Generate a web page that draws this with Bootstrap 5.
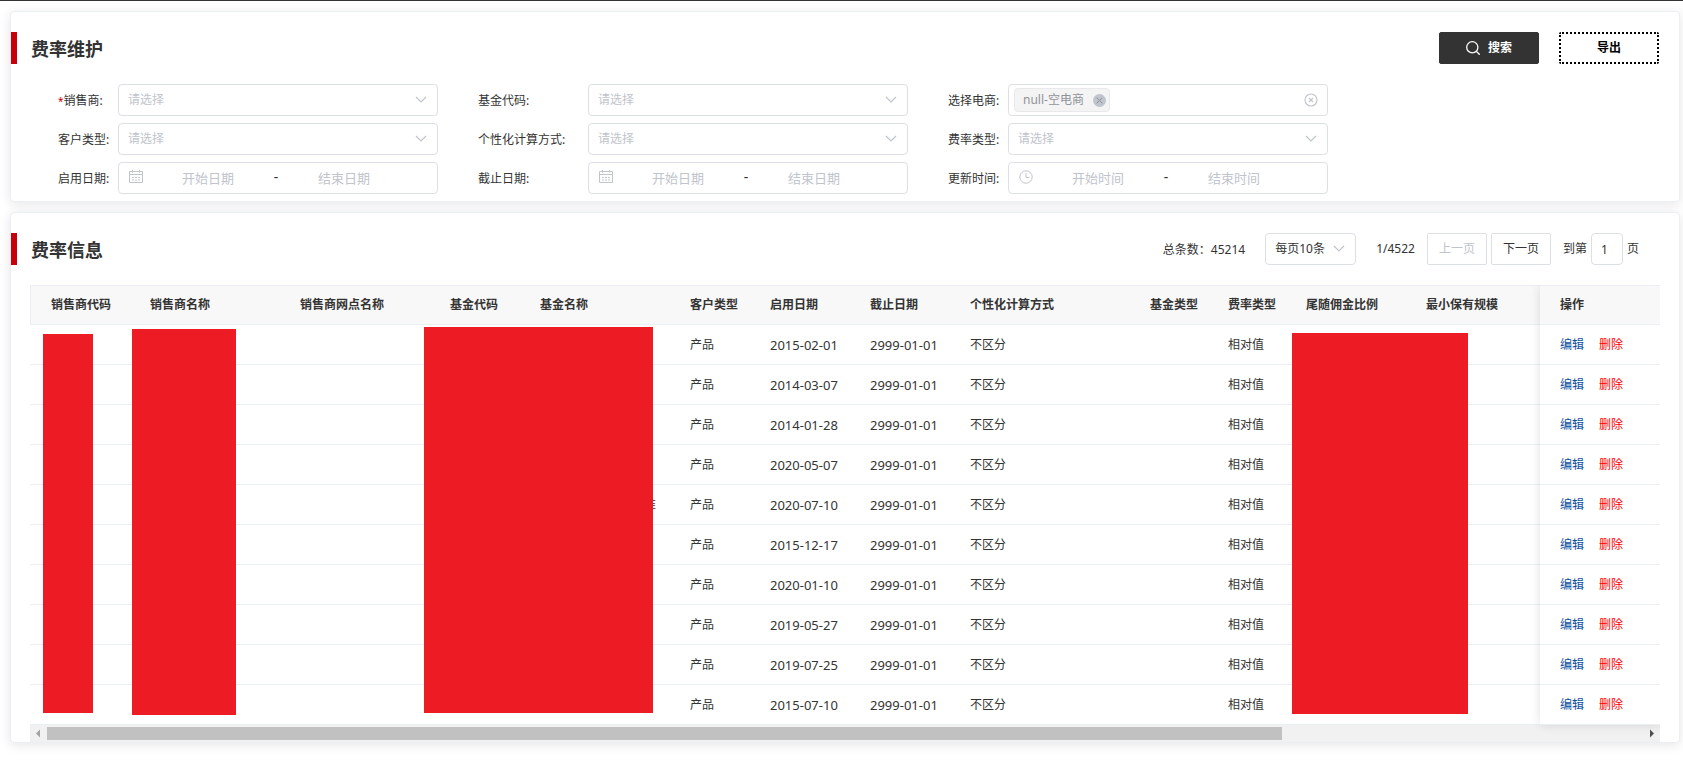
<!DOCTYPE html>
<html lang="zh-CN">
<head>
<meta charset="utf-8">
<meta name="viewport" content="width=device-width, initial-scale=1">
<title>费率维护</title>
<link href="https://cdn.jsdelivr.net/npm/bootstrap@5.3.0/dist/css/bootstrap.min.css" rel="stylesheet">
<style>
body { font-family: "Noto Sans", "Noto Sans CJK SC", sans-serif; font-size: 12px; line-height: 20px; color: #333; background: #fff; border-top: 1px solid #333; }
.page { padding: 10px 3px 20px 10px; gap: 10px; }
.panel { border: 1px solid #ebeef5; border-radius: 4px; box-shadow: 0 2px 12px rgba(0,0,0,.1); background: #fff; }
.panel-head { padding: 20px 20px 0 0; }
.panel-title { font-size: 18px; font-weight: 700; line-height: 30px; border-left: 6px solid #c7000b; padding: 2px 0 0 14px; margin: 0; }
.actions { gap: 20px; }
.action { width: 100px; height: 32px; border-radius: 2px; padding: 0; font-size: 12px; font-weight: 700; }
.action-search, .action-search:hover { background: #333; border-color: #333; color: #fff; }
.action-export, .action-export:hover { background: #fff; border: 2px dotted #000; color: #000; }
.filters { display: grid; grid-template-columns: minmax(0,380px) minmax(0,430px) minmax(0,380px); gap: 7px 40px; padding: 20px 20px 7px 47px; }
.field-label { width: 60px; flex: none; padding-top: 2px; white-space: nowrap; }
.wide .field-label { width: 110px; }
.req { color: #c7000b; font-size: 10px; }
.ctl { height: 32px; min-width: 0; flex: 1; border: 1px solid #dcdfe6; border-radius: 4px; background-color: #fff; font-size: 12px; color: #333; }
.ctl.form-select { color: #c0c4cc; padding: 0 30px 0 9px; background-image: url("data:image/svg+xml,%3Csvg xmlns='http://www.w3.org/2000/svg' viewBox='0 0 12 8'%3E%3Cpath d='M1 1l5 5 5-5' fill='none' stroke='%23c0c4cc' stroke-width='1.2'/%3E%3C/svg%3E"); background-size: 12px 8px; background-position: right 10px center; }
.multi { padding: 0 9px 0 5px; }
.range { padding: 0 10px; }
.range input { border: 0; padding: 0; width: 116px; min-width: 0; text-align: center; font-size: 13px; background: none; outline: 0; color: #333; }
.range input::placeholder { color: #c0c4cc; opacity: 1; }
.range svg { width: 14px; height: 14px; flex: none; margin: 0 7px 2px 0; }
.dash { width: 20px; text-align: center; font-size: 14px; padding-bottom: 2px; }
.tag { height: 24px; padding: 0 3px 0 8px; gap: 9px; border: 1px solid #e9e9eb; border-radius: 4px; background: #f4f4f5; color: #909399; }
.icon-btn { border: 0; padding: 0; background: none; display: flex; }
.num { font-size: 13px; }
.colon { font-family: "Noto Sans CJK TC", sans-serif; }
.pager { padding-right: 20px; }
.pager .ctl { flex: none; }
.ctl.form-select.size { width: 91px; color: #333; padding: 0 24px 0 9px; margin: 0 20px; }
.ctl.goto { width: 32px; padding: 0 9px; }
.page-btn, .page-btn:disabled, .page-btn:hover { width: 60px; height: 32px; padding: 0; border: 1px solid #dcdfe6; border-radius: 2px; background: #fff; color: #333; font-size: 12px; }
.page-btn:disabled { color: #c0c4cc; opacity: 1; }
.before { margin: 0 4px 0 12px; }
.table-zone { margin: 20px 19px 0; position: relative; }
.grid { width: 100%; table-layout: fixed; border-collapse: separate; border-spacing: 0; }
.grid th, .grid td { height: 40px; padding: 0 0 0 20px; border-bottom: 1px solid #ebeef5; white-space: nowrap; }
.grid th { background: #f8f8f8; font-weight: 700; border-top: 1px solid #ebeef5; }
.grid th:first-child { border-left: 1px solid #ebeef5; }
.grid .name { text-align: right; padding-right: 14px; }
.grid a { text-decoration: none; margin-right: 15px; }
.edit { color: #0d4ea2; }
.del { color: #f00; }
.fixed-edge { position: absolute; top: 0; right: 0; bottom: 17px; width: 120px; box-shadow: 0 0 10px rgba(0,0,0,.12); pointer-events: none; clip-path: inset(0 0 -10px -10px); }
.redact { position: absolute; background: #ed1c24; }
.scroll-track { height: 17px; background: #f1f1f1; padding: 0 5px; }
.scroll-thumb { height: 13px; background: #c1c1c1; }
</style>
</head>
<body>
<main class="page d-flex flex-column">
<section class="panel">
  <div class="panel-head d-flex justify-content-between">
    <h1 class="panel-title">费率维护</h1>
    <div class="actions d-flex">
      <button class="btn action action-search d-flex align-items-center justify-content-center gap-2" type="button"><svg width="14" height="14" viewBox="0 0 14 14" fill="none" stroke="currentColor" stroke-width="1.3"><circle cx="6.3" cy="6.3" r="5.6"/><path d="M10.5 10.5l3.2 3.2"/></svg>搜索</button>
      <button class="btn action action-export" type="button">导出</button>
    </div>
  </div>
  <form class="filters">
    <div class="d-flex align-items-center"><label class="field-label" for="seller"><span class="req">*</span>销售商:</label><select id="seller" class="form-select ctl"><option>请选择</option></select></div>
    <div class="d-flex align-items-center wide"><label class="field-label" for="fund">基金代码:</label><select id="fund" class="form-select ctl"><option>请选择</option></select></div>
    <div class="d-flex align-items-center"><label class="field-label" for="shopClear">选择电商:</label>
      <div class="ctl multi d-flex align-items-center justify-content-between">
        <span class="tag d-flex align-items-center">null-空电商<button class="icon-btn" type="button" aria-label="移除"><svg width="13" height="13" viewBox="0 0 13 13"><circle cx="6.5" cy="6.5" r="6.5" fill="#c0c4cc"/><path d="M3.7 3.7l5.6 5.6M9.3 3.7l-5.6 5.6" stroke="#909399"/></svg></button></span>
        <button id="shopClear" class="icon-btn" type="button" aria-label="清空"><svg width="14" height="14" viewBox="0 0 14 14" fill="none" stroke="#c0c4cc" stroke-width="1.1"><circle cx="7" cy="7" r="6"/><path d="M5 5l4 4M9 5l-4 4"/></svg></button>
      </div></div>
    <div class="d-flex align-items-center"><label class="field-label" for="cust">客户类型:</label><select id="cust" class="form-select ctl"><option>请选择</option></select></div>
    <div class="d-flex align-items-center wide"><label class="field-label" for="calc">个性化计算方式:</label><select id="calc" class="form-select ctl"><option>请选择</option></select></div>
    <div class="d-flex align-items-center"><label class="field-label" for="rate">费率类型:</label><select id="rate" class="form-select ctl"><option>请选择</option></select></div>
    <div class="d-flex align-items-center"><label class="field-label" for="start">启用日期:</label>
      <div class="ctl range d-flex align-items-center"><svg viewBox="0 0 14 14" fill="none" stroke="#c0c4cc"><path d="M.5 1.5h13v11H.5zM.5 4.5h13M3.5 0v2.5M10.5 0v2.5M3 7.5h2M6 7.5h2M9 7.5h2M3 10h2M6 10h2M9 10h2"/></svg><input id="start" placeholder="开始日期"><span class="dash">-</span><input placeholder="结束日期" aria-label="结束日期"></div></div>
    <div class="d-flex align-items-center wide"><label class="field-label" for="end">截止日期:</label>
      <div class="ctl range d-flex align-items-center"><svg viewBox="0 0 14 14" fill="none" stroke="#c0c4cc"><path d="M.5 1.5h13v11H.5zM.5 4.5h13M3.5 0v2.5M10.5 0v2.5M3 7.5h2M6 7.5h2M9 7.5h2M3 10h2M6 10h2M9 10h2"/></svg><input id="end" placeholder="开始日期"><span class="dash">-</span><input placeholder="结束日期" aria-label="结束日期"></div></div>
    <div class="d-flex align-items-center"><label class="field-label" for="upd">更新时间:</label>
      <div class="ctl range d-flex align-items-center"><svg viewBox="0 0 14 14" fill="none" stroke="#c0c4cc"><circle cx="7" cy="7" r="6.2"/><path d="M7 3v4.5h3.5"/></svg><input id="upd" placeholder="开始时间"><span class="dash">-</span><input placeholder="结束时间" aria-label="结束时间"></div></div>
  </form>
</section>

<section class="panel">
  <div class="panel-head d-flex justify-content-between">
    <h2 class="panel-title">费率信息</h2>
    <div class="pager d-flex align-items-center">
      <span>总条数<span class="colon">：</span>45214</span>
      <select class="form-select ctl size" aria-label="每页条数"><option>每页10条</option></select>
      <span>1/4522</span>
      <button class="btn page-btn before" type="button" disabled>上一页</button>
      <button class="btn page-btn" type="button">下一页</button>
      <label class="before" for="goto">到第</label>
      <input id="goto" class="ctl goto" value="1">
      <span class="ps-1">页</span>
    </div>
  </div>
  <div class="table-zone">
    <table class="grid">
      <colgroup><col style="width:100px"><col style="width:150px"><col style="width:150px"><col style="width:90px"><col style="width:150px"><col style="width:80px"><col style="width:100px"><col style="width:100px"><col style="width:180px"><col style="width:78px"><col style="width:78px"><col style="width:120px"><col><col style="width:120px"></colgroup>
      <thead><tr><th>销售商代码</th><th>销售商名称</th><th>销售商网点名称</th><th>基金代码</th><th>基金名称</th><th>客户类型</th><th>启用日期</th><th>截止日期</th><th>个性化计算方式</th><th>基金类型</th><th>费率类型</th><th>尾随佣金比例</th><th>最小保有规模</th><th>操作</th></tr></thead>
      <tbody id="rows"></tbody>
    </table>
    <div class="scroll-track d-flex align-items-center justify-content-between">
      <svg width="12" height="9" viewBox="0 0 12 9"><path d="M5 .5v8L1 4.5z" fill="#a3a3a3"/></svg>
      <div class="flex-fill"><div class="scroll-thumb" style="width:77.4%"></div></div>
      <svg width="12" height="9" viewBox="0 0 12 9"><path d="M7 .5v8l4-4z" fill="#505050"/></svg>
    </div>
    <div class="fixed-edge"></div>
    <div class="redact" style="left:13px;top:49px;width:50px;height:379px"></div>
    <div class="redact" style="left:102px;top:44px;width:104px;height:386px"></div>
    <div class="redact" style="left:394px;top:42px;width:229px;height:386px"></div>
    <div class="redact" style="left:1262px;top:48px;width:176px;height:381px"></div>
  </div>
</section>
</main>
<script>
const dates = ['2015-02-01','2014-03-07','2014-01-28','2020-05-07','2020-07-10','2015-12-17','2020-01-10','2019-05-27','2019-07-25','2015-07-10'];
const names = { 4: '准' };
document.getElementById('rows').innerHTML = dates.map((d, i) =>
  `<tr><td></td><td></td><td></td><td></td><td class="name">${names[i] || ''}</td><td>产品</td><td class="num">${d}</td><td class="num">2999-01-01</td><td>不区分</td><td></td><td>相对值</td><td></td><td></td><td><a class="edit" href="#">编辑</a><a class="del" href="#">删除</a></td></tr>`).join('');
</script>
<script src="https://cdn.jsdelivr.net/npm/bootstrap@5.3.0/dist/js/bootstrap.bundle.min.js"></script>
</body>
</html>
